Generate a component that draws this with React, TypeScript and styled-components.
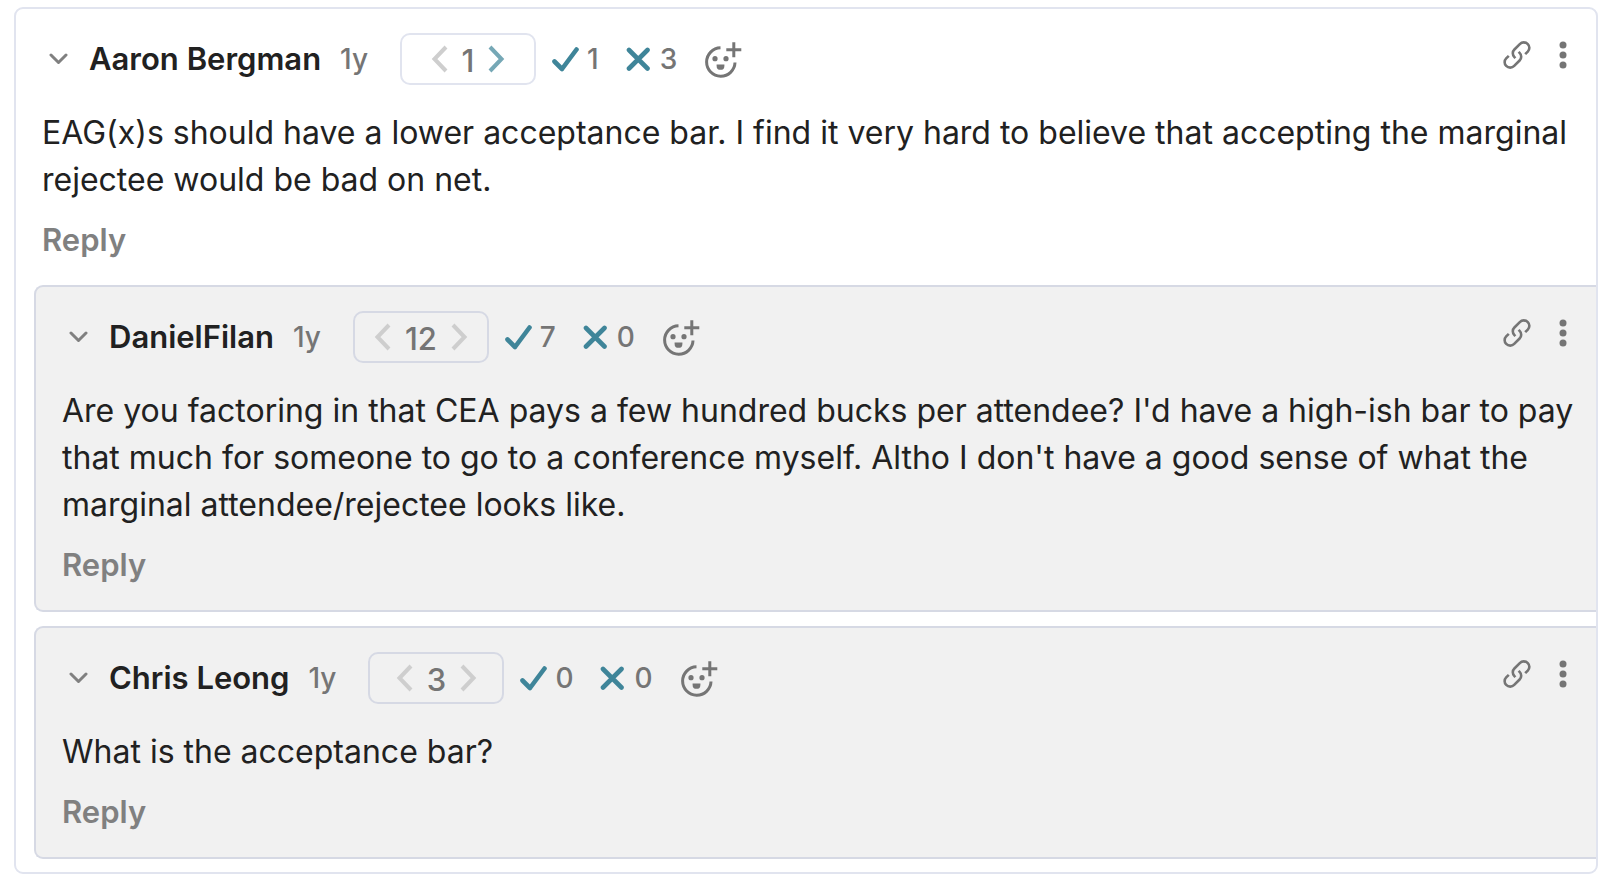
import React from "react";
import styled, { createGlobalStyle } from "styled-components";

const GlobalStyle = createGlobalStyle`
  *, *::before, *::after { box-sizing: border-box; }
  body {
    margin: 0;
    background: #ffffff;
    color: #212121;
    font-family: Inter, "Liberation Sans", sans-serif;
    font-size: 31px;
    line-height: 47px;
    font-weight: 500;
  }
  button {
    font: inherit;
    color: inherit;
    background: none;
    border: 0;
    padding: 0;
    cursor: pointer;
  }
  svg { display: block; flex: none; }
`;

const Page = styled.main`
  padding: 7px 26px 20px 14px;
`;

const Thread = styled.article`
  border: 2px solid #e1e4ef;
  border-radius: 9px;
  padding-bottom: 13px;
  overflow: hidden;
`;

const Replies = styled.div`
  display: flex;
  flex-direction: column;
  gap: 14px;
  padding-left: 18px;
`;

const ReplyCard = styled.article`
  background: #f1f1f1;
  border: 2px solid #d6d9e4;
  border-right: 0;
  border-radius: 9px 0 0 9px;
`;

const CommentBody = styled.div`
  padding: 24px 20px 22px 26px;
`;

const Header = styled.header`
  display: flex;
  align-items: center;
  height: 52px;
  color: #757575;
`;

const CollapseButton = styled.button`
  padding: 0 21px 0 7px;
`;

const Author = styled.a`
  padding-bottom: 2px;
  color: #212121;
  font-weight: 600;
  text-decoration: none;
  white-space: nowrap;
`;

const Age = styled.time`
  margin: 0 32px 0 19px;
  font-size: 28px;
`;

const VoteBox = styled.div`
  display: flex;
  align-items: center;
  justify-content: center;
  gap: 14px;
  width: 136px;
  height: 52px;
  border: 2px solid ${(p: { $nested: boolean }) => (p.$nested ? "#d6d9e4" : "#e1e4ef")};
  border-radius: 10px;
`;

const Karma = styled.span`
  padding-top: 2px;
`;

const VoteButton = styled.button<{ $active?: boolean }>`
  color: ${(p) => (p.$active ? "#76a8b6" : "#cecece")};
`;

const Reactions = styled.div`
  display: flex;
  align-items: center;
  gap: 27px;
  margin-left: 16px;
`;

const Reaction = styled.button`
  display: flex;
  align-items: center;
  gap: 8px;
  font-size: 28px;

  svg { color: #3f8599; }
`;

const Tools = styled.div`
  display: flex;
  align-items: center;
  align-self: flex-start;
  gap: 19px;
  height: 44px;
  margin-left: auto;
`;

const Text = styled.p`
  margin: 24px 0 13px;
  font-size: 32px;
  font-weight: 400;
`;

const ReplyButton = styled.button`
  display: block;
  color: #808080;
  font-weight: 600;
`;

const ChevronDown = () => (
  <svg width="19" height="12" viewBox="0 0 19 12" fill="none" stroke="#808080" strokeWidth="3" strokeLinecap="round" strokeLinejoin="round" aria-hidden="true">
    <path d="M2 2l7.5 7.5L17 2" />
  </svg>
);

const Arrow = ({ right }: { right?: boolean }) => (
  <svg width="17" height="28" viewBox="0 0 17 28" fill="none" stroke="currentColor" strokeWidth="4" aria-hidden="true">
    <path d={right ? "M2 2l11.500 12L2 26" : "M15 2L3.500 14 15 26"} />
  </svg>
);

const Check = () => (
  <svg width="27" height="26" viewBox="0 0 27 26" fill="none" stroke="currentColor" strokeWidth="4.600" strokeLinecap="round" strokeLinejoin="round" aria-hidden="true">
    <path d="M2.500 15.500L10 23 24.500 3.500" />
  </svg>
);

const Cross = () => (
  <svg width="26" height="26" viewBox="0 0 26 26" fill="none" stroke="currentColor" strokeWidth="4.600" strokeLinecap="round" aria-hidden="true">
    <path d="M3 4l18.500 18.500M21.500 4L3 22.500" />
  </svg>
);

const AddReaction = () => (
  <svg width="38" height="38" viewBox="0 0 38 38" fill="none" stroke="currentColor" strokeWidth="3" aria-hidden="true">
    <path d="M16.500 7.800A14.200 14.200 0 1 0 31 22.500" />
    <path d="M29.800 2.300v15M22.300 9.800h15" />
    <g fill="currentColor" stroke="none">
      <circle cx="11" cy="18.700" r="2.600" />
      <circle cx="22" cy="18.700" r="2.600" />
      <path d="M12.600 24.400h7.800v1.500a3.900 3.900 0 0 1-7.800 0z" />
    </g>
  </svg>
);

const LinkIcon = () => (
  <svg width="28" height="28" viewBox="0 0 28 28" fill="none" stroke="currentColor" strokeWidth="2.600" aria-hidden="true">
    <path d="M22.200 13.200L24.800 10.600a5.300 5.300 0 0 0 0-7.500 5.600 5.600 0 0 0-8 0l-5.400 5.400a5.300 5.300 0 0 0 0 7.600l1 1" />
    <path d="M5.800 14.800L3.200 17.400a5.300 5.300 0 0 0 0 7.500 5.600 5.600 0 0 0 8 0l5.400-5.400a5.300 5.300 0 0 0 0-7.600l-1-1" />
  </svg>
);

const MoreIcon = () => (
  <svg width="26" height="28" viewBox="0 0 26 28" fill="currentColor" aria-hidden="true">
    <circle cx="13" cy="4" r="3.500" />
    <circle cx="13" cy="14" r="3.500" />
    <circle cx="13" cy="24" r="3.500" />
  </svg>
);

type CommentData = {
  author: string;
  age: string;
  karma: number;
  canUpvote?: boolean;
  agree: number;
  disagree: number;
  text: string;
};

const Comment = ({ data, nested = false }: { data: CommentData; nested?: boolean }) => (
  <CommentBody>
    <Header>
      <CollapseButton aria-label="Collapse comment"><ChevronDown /></CollapseButton>
      <Author href="#">{data.author}</Author>
      <Age>{data.age}</Age>
      <VoteBox $nested={nested}>
        <VoteButton aria-label="Downvote"><Arrow /></VoteButton>
        <Karma>{data.karma}</Karma>
        <VoteButton aria-label="Upvote" $active={data.canUpvote}><Arrow right /></VoteButton>
      </VoteBox>
      <Reactions>
        <Reaction aria-label="Agree"><Check /><span>{data.agree}</span></Reaction>
        <Reaction aria-label="Disagree"><Cross /><span>{data.disagree}</span></Reaction>
        <button aria-label="Add reaction"><AddReaction /></button>
      </Reactions>
      <Tools>
        <button aria-label="Copy link"><LinkIcon /></button>
        <button aria-label="More options"><MoreIcon /></button>
      </Tools>
    </Header>
    <Text>{data.text}</Text>
    <ReplyButton>Reply</ReplyButton>
  </CommentBody>
);

const root: CommentData = {
  author: "Aaron Bergman",
  age: "1y",
  karma: 1,
  canUpvote: true,
  agree: 1,
  disagree: 3,
  text: "EAG(x)s should have a lower acceptance bar. I find it very hard to believe that accepting the marginal rejectee would be bad on net.",
};

const replies: CommentData[] = [
  {
    author: "DanielFilan",
    age: "1y",
    karma: 12,
    agree: 7,
    disagree: 0,
    text: "Are you factoring in that CEA pays a few hundred bucks per attendee? I'd have a high-ish bar to pay that much for someone to go to a conference myself. Altho I don't have a good sense of what the marginal attendee/rejectee looks like.",
  },
  {
    author: "Chris Leong",
    age: "1y",
    karma: 3,
    agree: 0,
    disagree: 0,
    text: "What is the acceptance bar?",
  },
];

export default function App() {
  return (
    <Page>
      <GlobalStyle />
      <Thread>
        <Comment data={root} />
        <Replies>
          {replies.map((reply) => (
            <ReplyCard key={reply.author}>
              <Comment data={reply} nested />
            </ReplyCard>
          ))}
        </Replies>
      </Thread>
    </Page>
  );
}
